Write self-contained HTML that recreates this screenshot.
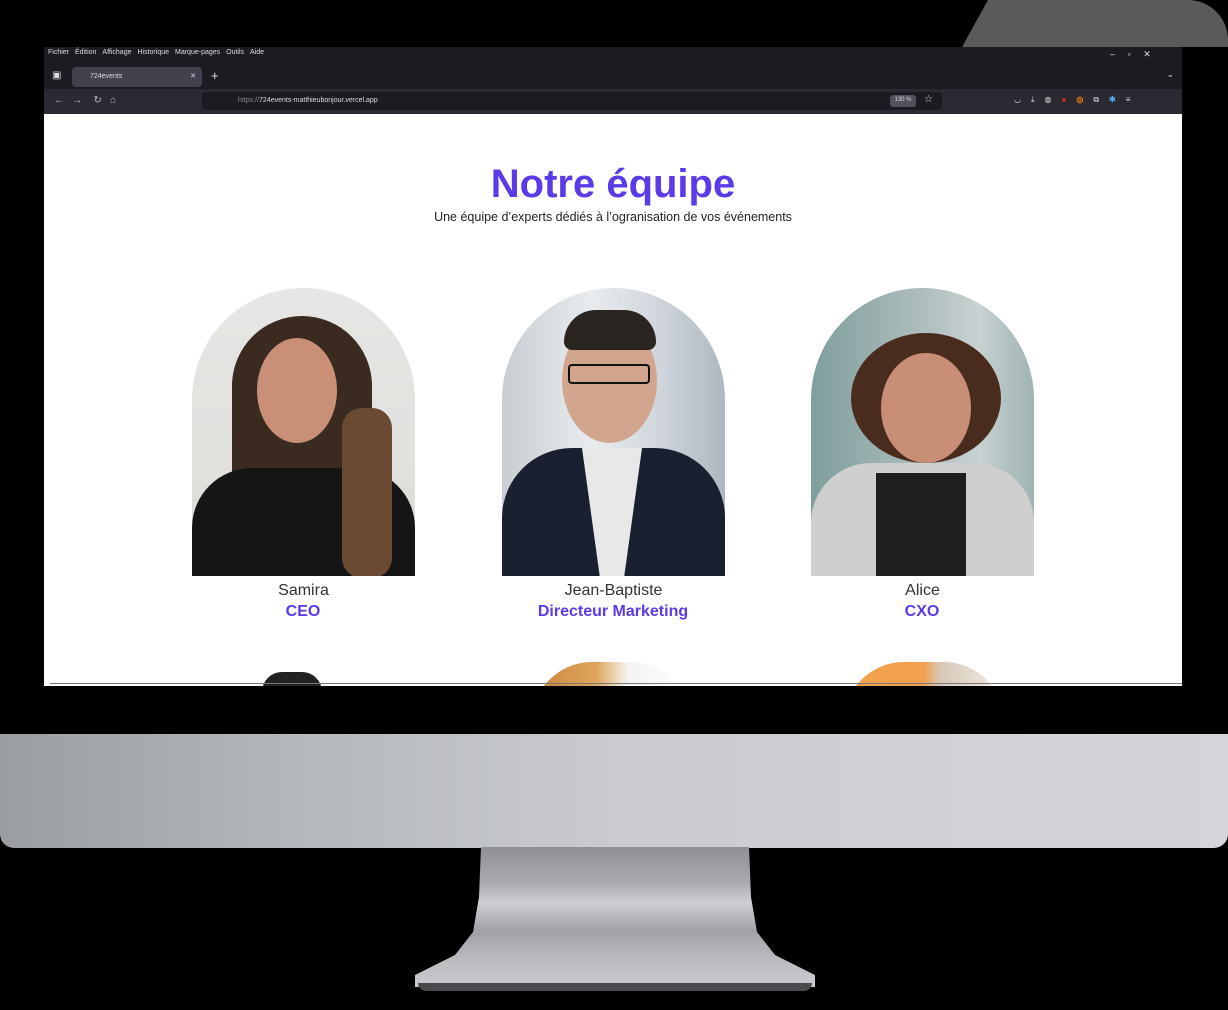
<!DOCTYPE html>
<html><head><meta charset="utf-8"><style>
*{margin:0;padding:0;box-sizing:border-box}
body{width:1228px;height:1010px;background:#000;position:relative;overflow:hidden;font-family:"Liberation Sans",sans-serif}
.bezel{position:absolute;left:0;top:0;width:1228px;height:735px;background:#000;border-radius:22px 22px 0 0;overflow:hidden}
.refl{position:absolute;left:0;top:0;width:1228px;height:60px;background:#5a5a5a;clip-path:polygon(988px 0,1228px 0,1228px 47px,962px 47px);border-top-right-radius:40px}
.chin{position:absolute;left:0;top:734px;width:1228px;height:114px;background:linear-gradient(90deg,#9a9da2 0%,#b5b8bc 25%,#c9cbcf 50%,#d0d2d6 80%,#d3d5d8 100%);border-radius:0 0 14px 14px}
.stand{position:absolute;left:415px;top:847px;width:400px;height:140px;background:linear-gradient(180deg,#8e9094 0%,#a8aaae 25%,#cfd0d3 40%,#9fa1a5 60%,#b9bbbf 80%,#c9cbd0 100%);clip-path:polygon(66px 0,334px 0,336px 50px,342px 85px,360px 108px,400px 128px,400px 140px,0 140px,0 128px,40px 108px,58px 85px,64px 50px);}
.base{position:absolute;left:418px;top:983px;width:394px;height:8px;background:#4a4b4e;border-radius:0 0 10px 10px}
.screen{position:absolute;left:44px;top:47px;width:1138px;height:639px;background:#fff;overflow:hidden}
.menu{height:18px;background:#1c1b22;color:#ddd;font-size:7px;padding:2px 4px;white-space:nowrap}
.menu span{margin-right:6px}
.tabs{height:24px;background:#1c1b22;position:relative}
.tab{position:absolute;left:28px;top:2px;width:130px;height:20px;background:#42414d;border-radius:4px;color:#ddd;font-size:7px;padding:6px 0 0 18px}
.nav{height:25px;background:#2b2a33;position:relative;color:#bbb;font-size:7px}
.url{position:absolute;left:158px;top:3px;width:740px;height:18px;background:#1c1b22;border-radius:4px;padding:5px 0 0 36px;color:#ddd}
.zoom{position:absolute;left:846px;top:6px;width:26px;height:12px;background:#52525e;border-radius:3px;font-size:6px;color:#ddd;text-align:center;padding-top:2px}
.page{position:relative;height:572px;background:#fff}
h1{position:absolute;left:0;width:1138px;top:48px;text-align:center;color:#5b3ae8;font-size:40px;font-weight:bold}
.sub{position:absolute;left:0;width:1138px;top:96px;text-align:center;font-size:12.5px;color:#222}
.arch{position:absolute;top:174px;width:223px;height:288px;border-radius:112px 112px 0 0;overflow:hidden}
.name{position:absolute;width:223px;text-align:center;top:468px;font-size:16px;color:#333}
.role{position:absolute;width:260px;text-align:center;top:489px;font-size:16px;font-weight:bold;color:#5b3ae8}
.head{position:absolute;border-radius:50%}
.arch2{position:absolute;top:548px;width:160px;height:60px;border-radius:80px 80px 0 0;overflow:hidden}
</style></head><body>
<div class="bezel"><div class="refl"></div></div>
<div class="chin"></div>
<div class="stand"></div><div class="base"></div>
<div class="screen">
 <div class="menu"><span>Fichier</span><span>Édition</span><span>Affichage</span><span>Historique</span><span>Marque-pages</span><span>Outils</span><span>Aide</span><span style="position:absolute;left:1066px;top:2px;font-size:9px">–&nbsp;&nbsp;&nbsp;&nbsp;&nbsp;▫&nbsp;&nbsp;&nbsp;&nbsp;&nbsp;✕</span></div>
 <div class="tabs"><span style="position:absolute;left:8px;top:5px;color:#ddd;font-size:10px">▣</span><div class="tab">724events<span style="position:absolute;right:6px;top:5px">✕</span></div><span style="position:absolute;left:167px;top:3px;color:#ddd;font-size:13px">+</span><span style="position:absolute;right:8px;top:4px;color:#ddd;font-size:9px">⌄</span></div>
 <div class="nav"><span style="position:absolute;left:10px;top:6px;font-size:10px">←&nbsp;&nbsp;&nbsp;→&nbsp;&nbsp;&nbsp;&nbsp;↻&nbsp;&nbsp;&nbsp;⌂</span><div class="url"><span style="color:#888">https://</span>724events-matthieubonjour.vercel.app</div><div class="zoom">130 %</div><span style="position:absolute;left:880px;top:5px;font-size:10px;color:#ddd">☆</span><span style="position:absolute;left:970px;top:6px;font-size:8px;color:#ddd;letter-spacing:10px">◡⤓◍<b style="color:#e22">●</b><b style="color:#f80">◎</b>⧉<b style="color:#5bf">✻</b>≡</span></div>
 <div class="page">
  <h1>Notre équipe</h1>
  <div class="sub">Une équipe d’experts dédiés à l’ogranisation de vos événements</div>
  <div class="arch" style="left:148px;background:linear-gradient(180deg,#e6e6e4 0%,#e2e1de 60%,#d8d6d2 100%)">
    <div class="head" style="left:40px;top:28px;width:140px;height:200px;background:#3a2a20;border-radius:70px 70px 30px 30px"></div>
    <div class="head" style="left:65px;top:50px;width:80px;height:105px;background:#c99077"></div>
    <div style="position:absolute;left:0;top:180px;width:223px;height:110px;background:#151515;border-radius:60px 60px 0 0"></div>
    <div style="position:absolute;left:150px;top:120px;width:50px;height:170px;background:#6b4a33;border-radius:20px"></div>
  </div>
  <div class="name" style="left:148px">Samira</div><div class="role" style="left:129px">CEO</div>
  <div class="arch" style="left:458px;background:linear-gradient(90deg,#c8cdd2,#e9ecef 40%,#d0d6dc 70%,#aeb7c0)">
    <div class="head" style="left:60px;top:30px;width:95px;height:125px;background:#d2a58e"></div>
    <div style="position:absolute;left:62px;top:22px;width:92px;height:40px;background:#2b2522;border-radius:40px 40px 10px 10px"></div>
    <div style="position:absolute;left:66px;top:76px;width:82px;height:20px;border:2px solid #111;border-radius:4px"></div>
    <div style="position:absolute;left:0;top:160px;width:223px;height:130px;background:#1b2030;border-radius:70px 70px 0 0"></div>
    <div style="position:absolute;left:80px;top:160px;width:60px;height:130px;background:#e8e8e8;clip-path:polygon(0 0,100% 0,70% 100%,30% 100%)"></div>
  </div>
  <div class="name" style="left:458px">Jean-Baptiste</div><div class="role" style="left:439px">Directeur Marketing</div>
  <div class="arch" style="left:767px;background:linear-gradient(90deg,#7f9e9c,#aebdbd 50%,#c8d2d2 75%,#9fb3b2)">
    <div class="head" style="left:40px;top:45px;width:150px;height:130px;background:#4a2c1e"></div>
    <div class="head" style="left:70px;top:65px;width:90px;height:110px;background:#c98f76"></div>
    <div style="position:absolute;left:0;top:175px;width:223px;height:115px;background:#cfcfcf;border-radius:60px 60px 0 0"></div>
    <div style="position:absolute;left:65px;top:185px;width:90px;height:105px;background:#1e1e1e"></div>
  </div>
  <div class="name" style="left:767px">Alice</div><div class="role" style="left:748px">CXO</div>
  <div style="position:absolute;left:218px;top:558px;width:60px;height:20px;background:#222;border-radius:30px 30px 0 0"></div>
  <div class="arch2" style="left:488px;background:linear-gradient(90deg,#c8843c,#e0a55c 40%,#f4f4f4 60%,#fff)"></div>
  <div class="arch2" style="left:800px;background:linear-gradient(90deg,#f3a24c,#f0a050 50%,#d8c8b8 60%,#f1ece6)"></div>
  <div style="position:absolute;left:6px;top:569px;width:1132px;height:1px;background:#777"></div>
 </div>
</div>
</body></html>
